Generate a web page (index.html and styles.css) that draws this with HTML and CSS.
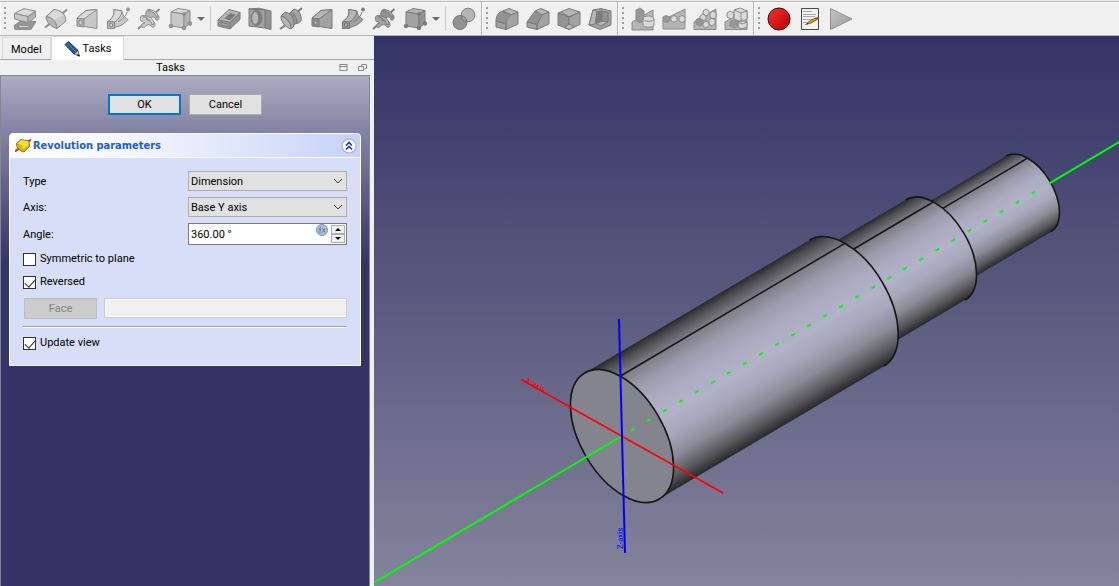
FILE: index.html
```html
<!DOCTYPE html>
<html lang="en">
<head>
<meta charset="utf-8">
<title>Revolution parameters</title>
<link rel="stylesheet" href="styles.css">
</head>
<body>
<svg class="defs" aria-hidden="true">
  <symbol id="pad" viewBox="0 0 24 24"><path class="d" d="M1 18.500l6-4h16l-5 8H2z"/><path class="a" d="M6 18.500h11l-2 2H5z"/><path class="a" d="M1.500 6.500L11 1.500l11.500 2.700L15 9.500z"/><path class="b" d="M1.500 6.500L15 9.500v6.200L1.500 12z"/><path class="c" d="M15 9.500l7.500-5.300v6L15 15.700z"/></symbol>
  <symbol id="revolve" viewBox="0 0 24 24"><path class="l2" d="M1 20.500l5-4M18.500 6.500l4.500-4"/><path class="c" d="M2 9.500C2 15 7 20 13 21.500c0-6-4-11-11-12z"/><path class="b" d="M2 9.500L10 2.500C17 3 21.500 7 22 14l-9 7.500c0-6-4-11-11-12z"/><path class="a flat" d="M4.500 8.800l6-5.300c4 .3 7 2.500 9 5.500-4 0-7 2-9 4.500-1.500-2-3.500-3.700-6-4.700z"/></symbol>
  <symbol id="loft" viewBox="0 0 24 24"><path class="b" d="M2 11L11 3.500l11-1v19L9 19.500z"/><path class="a" d="M2 11l9-7.500 11-1L9 12z"/><path class="c" d="M2 11.500l7 .5v8l-7-1z"/><path class="a" d="M4 13.500l3 .5v4l-3-.5z"/></symbol>
  <symbol id="pipe" viewBox="0 0 24 24"><path class="b" d="M2 14.500C7 11 9 7 7.500 2.500L16 4c0 3 2 6 6 8.500-3 4-8 7-13.500 8z"/><path class="a" d="M2 14.500C7 11 9 7 7.500 2.500L16 4c-.5 4-3 8-7.500 11z"/><path class="c" d="M1.500 14.500l7 .5v6.500h-7z"/><path class="a" d="M3.500 16.500l3 .5v2.500h-3z"/><path class="l" d="M12 15c5-3 8-6 9-10"/><circle class="d" cx="22" cy="2.500" r="1.500"/></symbol>
  <symbol id="helix" viewBox="0 0 24 24"><path class="l2" d="M1 22l8-7M16 8l6.500-6"/><path class="b" d="M4 14c-2-4 1-7 4-5l9 6c2 2 1 6-2 5-1-2-3-3-5-2s-3 4-5 2 1-4 3-4c-2-1-3-2-4-2z"/><path class="c" d="M9 9c-1-5 2-8 5-6l7 5c2 2 1 6-2 5-1-3-3-4-5-2l1 4-5-2z"/><path class="a" d="M6 10c4 0 8 3 9 8l2-1c0-4-4-8-9-8zM11 4c5 0 8 3 9 7l1-2c-1-4-5-6-8-6z"/></symbol>
  <symbol id="box" viewBox="0 0 24 24"><path class="a" d="M3 5l7-3.500 12 2L16 7z"/><path class="b" d="M3 5l13 2v14L3 19z"/><path class="c" d="M16 7l6-3.500v13L16 21z"/><circle class="d" cx="3" cy="19" r="1.800"/><circle class="d" cx="16" cy="21" r="1.800"/><circle class="d" cx="22" cy="16.500" r="1.800"/><circle class="d" cx="16" cy="7" r="1.400"/></symbol>
  <symbol id="pocket" viewBox="0 0 24 24"><path class="a" d="M1 13L12 2.500l11 3L13 15.500z"/><path class="b" d="M1 13l12 2.500V22L1 19z"/><path class="c" d="M13 15.500l10-10v7L13 22z"/><path class="d" d="M8 11.500l5-5 5 1.300-5 5z"/><path class="l" d="M3 15l8 2v3l-8-2z"/></symbol>
  <symbol id="hole" viewBox="0 0 24 24"><path class="c" d="M1 2l10-.8L23 4v18.500L17 21V3z"/><path class="b" d="M1 2l16 1.200V21L1 19z"/><ellipse class="d" cx="8.500" cy="11" rx="5.500" ry="7.500"/><ellipse class="a" cx="7.200" cy="11" rx="3.500" ry="6.500"/></symbol>
  <symbol id="groove" viewBox="0 0 24 24"><path class="l2" d="M1 22l7-5M16 7l7-6"/><path class="b" d="M12 5l3-3c5 1 8 6 7 12l-4 3z"/><path class="c" d="M8 8l4-3c4 2 6 6 6 11l-4 2z"/><path class="b" d="M2 9l4-4c6 1 10 7 9 14l-3 3c-1-7-4-11-10-13z"/><path class="a" d="M2 9c0 6 4 11 10 13 0-6-4-11-10-13z"/></symbol>
  <symbol id="link" viewBox="0 0 24 24"><circle class="a" cx="16" cy="8" r="6.800"/><circle class="c" cx="8" cy="15.500" r="7"/><path class="b" d="M9.300 8.800a6.800 6.800 0 0 1 5.500 6A6.700 6.700 0 0 1 9.300 8.800z"/></symbol>
  <symbol id="fillet" viewBox="0 0 24 24"><path class="a" d="M8 4l6-2.500L23 5l-7 3z"/><path class="c" d="M1 14C1 8 4 5 8 4l8 4c-3 2-5 5-5 9z"/><path class="b" d="M1 14l10 3v5.500L1 20zM11 17c0-5 2-7 5-9l7-3v12l-12 5.500z"/></symbol>
  <symbol id="chamfer" viewBox="0 0 24 24"><path class="a" d="M9 4l6-2.500L23 5l-7 3z"/><path class="c" d="M1 15L9 4l7 4-5 9.500z"/><path class="b" d="M1 15l10 2.500v5L1 20zM11 17.500L16 8l7-3v12l-12 5.500z"/></symbol>
  <symbol id="draft" viewBox="0 0 24 24"><path class="a" d="M1 6l11-4.500L23 5l-11 5z"/><path class="c" d="M1 6l11 4v12.500L1 18z"/><path class="b" d="M12 10l11-5v12.500l-11 5z"/><path class="a" d="M8 20l4-3 5 2.500-5 3z"/><path class="l" d="M4 4.800l8 5.200 7-3.200"/></symbol>
  <symbol id="shell" viewBox="0 0 24 24"><path class="b" d="M5 3l8-1.500L23 4v14l-11 4.500L1 18z"/><path class="d" d="M9 5l5-1v10l-6 3z"/><path class="c" d="M14 4l6 1.500v9.500l-6-1z"/><path class="a" d="M8 17l6-3 6 1-7 4z"/><path class="a" d="M5 3l4 1-2 13-6 1z"/></symbol>
  <symbol id="mirror" viewBox="0 0 24 24"><path class="c" d="M1 15l21-12v20H1z"/><path class="d" d="M5 3l4-2 4 3v9l-4 3-4-3z"/><path class="a" d="M12 12c0-4 11-4 11 0v6c0 3-11 3-11 0z"/><path class="l" d="M12 12c0 3 11 3 11 0"/></symbol>
  <symbol id="linear" viewBox="0 0 24 24"><path class="c" d="M1 13L23 2v20H1z"/><path class="d" d="M1 10l3-1.500L8 10v4l-3 1.500L1 14z"/><path class="a" d="M9 10l3-1.500 3 1.500v4l-3 1.500L9 14zM17 10l3-1.500 3 1.500v4l-3 1.500-3-1.500z"/></symbol>
  <symbol id="polar" viewBox="0 0 24 24"><path class="c" d="M1 15L23 2v20.500H1z"/><path class="a" d="M10 4l3-2 3 2v3l-3 2-3-2zM17 6l3-2 3 2v4l-3 2-3-2zM16 13l3-2 3 2v4l-3 2-3-2zM7 9l3-2 3 2v3l-3 2-3-2zM10 16l3-2 3 2v3l-3 2-3-2z"/><path class="d" d="M3 13l3-2 4 2v4l-3 2-4-2z"/></symbol>
  <symbol id="multi" viewBox="0 0 24 24"><path class="c" d="M1 15L23 3v19.500H1z"/><path class="a" d="M10 3l6-2 7 3v8l-6 3-7-3zM3 6l3-2 4 2v4l-3 2-4-2zM14 15l4-2 5 2v5l-5 2-4-2z"/><path class="d" d="M6 15l4-2 4 2v4l-4 2-4-2z"/><path class="l" d="M10 3l7 3 6-2M17 6v9M14 15l4 2 5-2"/></symbol>
</svg>

<header class="toolbars">
  <div class="bar" role="toolbar" aria-label="Part Design modeling">
    <i class="handle"></i>
    <button class="tool" aria-label="Pad"><svg><use href="#pad"/></svg></button>
    <button class="tool" aria-label="Revolution"><svg><use href="#revolve"/></svg></button>
    <button class="tool" aria-label="Additive loft"><svg><use href="#loft"/></svg></button>
    <button class="tool" aria-label="Additive pipe"><svg><use href="#pipe"/></svg></button>
    <button class="tool" aria-label="Additive helix"><svg><use href="#helix"/></svg></button>
    <button class="tool split" aria-label="Additive box"><svg><use href="#box"/></svg><i class="caret"></i></button>
    <i class="sep"></i>
    <button class="tool dark" aria-label="Pocket"><svg><use href="#pocket"/></svg></button>
    <button class="tool dark" aria-label="Hole"><svg><use href="#hole"/></svg></button>
    <button class="tool dark" aria-label="Groove"><svg><use href="#groove"/></svg></button>
    <button class="tool dark" aria-label="Subtractive loft"><svg><use href="#loft"/></svg></button>
    <button class="tool dark" aria-label="Subtractive pipe"><svg><use href="#pipe"/></svg></button>
    <button class="tool dark" aria-label="Subtractive helix"><svg><use href="#helix"/></svg></button>
    <button class="tool dark split" aria-label="Subtractive box"><svg><use href="#box"/></svg><i class="caret"></i></button>
    <i class="sep"></i>
    <button class="tool dark" aria-label="Boolean"><svg><use href="#link"/></svg></button>
  </div>
  <div class="bar" role="toolbar" aria-label="Dress-up">
    <i class="handle"></i>
    <button class="tool dark" aria-label="Fillet"><svg><use href="#fillet"/></svg></button>
    <button class="tool dark" aria-label="Chamfer"><svg><use href="#chamfer"/></svg></button>
    <button class="tool dark" aria-label="Draft"><svg><use href="#draft"/></svg></button>
    <button class="tool dark" aria-label="Thickness"><svg><use href="#shell"/></svg></button>
  </div>
  <div class="bar" role="toolbar" aria-label="Transform">
    <i class="handle"></i>
    <button class="tool" aria-label="Mirrored"><svg><use href="#mirror"/></svg></button>
    <button class="tool" aria-label="Linear pattern"><svg><use href="#linear"/></svg></button>
    <button class="tool" aria-label="Polar pattern"><svg><use href="#polar"/></svg></button>
    <button class="tool" aria-label="MultiTransform"><svg><use href="#multi"/></svg></button>
  </div>
  <div class="bar last" role="toolbar" aria-label="Macro">
    <i class="handle"></i>
    <button class="tool" aria-label="Record macro"><svg viewBox="0 0 24 24"><defs><linearGradient id="rec" x1="0" y1="0" x2="1" y2="1"><stop offset="0" stop-color="#f33"/><stop offset="1" stop-color="#b00000"/></linearGradient></defs><circle cx="12" cy="12" r="11" fill="url(#rec)" stroke="#3a0a0a"/></svg></button>
    <button class="tool" aria-label="Macros"><svg viewBox="0 0 24 24"><path d="M3.500 1.500h17v21h-17z" fill="#f2f3f0" stroke="#454b48"/><path d="M5 4.500h9M5 7.500h13M5 9.500h12M5 12.500h7M5 15.500h5" stroke="#aaa"/><path d="M9 17l3-3.500 6-2.500 1 1.500-6 3.500z" fill="#d0b000" stroke="#5a4a10" stroke-width=".8"/><path d="M17 11l2.500-1 1 1.800-2.500 1z" fill="#e02020"/><path d="M7.500 17.500l2.500-1" stroke="#222"/></svg></button>
    <button class="tool" aria-label="Execute macro"><svg viewBox="0 0 24 24"><defs><linearGradient id="run" x1="0" y1="0" x2="1" y2="1"><stop offset="0" stop-color="#c4c4c4"/><stop offset="1" stop-color="#9a9a9a"/></linearGradient></defs><path d="M1.500 1.500L23 12 1.500 22.500z" fill="url(#run)" stroke="#909090"/></svg></button>
  </div>
</header>

<main class="work">
  <aside class="dock">
    <nav class="tabs">
      <button class="tab">Model</button>
      <button class="tab active"><svg class="pen" viewBox="0 0 16 16"><path d="M1 3.500L4.500.5 14 9.500l-4 3.500z" fill="#2c5a90" stroke="#16365c"/><path d="M3 2l9 9" stroke="#5484b8"/><path d="M10 13l4-3.500 1.300 5.500z" fill="#c8ccd2" stroke="#333" stroke-width=".7"/><path d="M13.500 13.500l2 1.800" stroke="#111" stroke-width="1.500"/></svg>Tasks</button>
    </nav>
    <div class="dock-title">
      <span>Tasks</span>
      <button class="mini" aria-label="Overlay"><svg viewBox="0 0 9 9"><path d="M1 1.500h7M.5 3.500h8M1 1v7M8 1v7M1 7.500h7"/></svg></button>
      <button class="mini" aria-label="Float"><svg viewBox="0 0 9 9"><path d="M3.500 3V1.500h5v4H6.500M.500 3.500h5v4h-5z"/></svg></button>
    </div>
    <section class="tasks">
      <div class="actions">
        <button class="push primary">OK</button>
        <button class="push">Cancel</button>
      </div>
      <form class="panel">
        <div class="panel-head">
          <svg class="rev" viewBox="0 0 16 16"><path d="M0 13.500l4-3M12 4.500l4-3" stroke="#d22" stroke-width="2"/><path d="M1.500 5.500L6 1.500l8 1.500 .5 5.500L9 14C4.500 13 1.500 10 1.500 5.500z" fill="#d6b800" stroke="#6a5a10" stroke-width=".8"/><path d="M2.500 5.500L6.500 2l7 1.500v3L8.500 11c-1-3-3-5-6-5.500z" fill="#f4df38"/></svg>
          <h2>Revolution parameters</h2>
          <button type="button" class="fold" aria-label="Collapse"><svg viewBox="0 0 16 16"><circle cx="8" cy="8" r="7" fill="#fff" stroke="#b4b8dc" stroke-width="1.500"/><path d="M5 7.500l3-3 3 3M5 11.500l3-3 3 3" fill="none" stroke="#1c3fa8" stroke-width="1.700"/></svg></button>
        </div>
        <div class="panel-body">
          <div class="row">
            <label for="type">Type</label>
            <span class="combo"><select id="type"><option>Dimension</option></select><svg viewBox="0 0 10 6"><path d="M1 1l4 4 4-4"/></svg></span>
          </div>
          <div class="row">
            <label for="axis">Axis:</label>
            <span class="combo"><select id="axis"><option>Base Y axis</option></select><svg viewBox="0 0 10 6"><path d="M1 1l4 4 4-4"/></svg></span>
          </div>
          <div class="row">
            <label for="angle">Angle:</label>
            <span class="spin"><input id="angle" type="text" value="360.00 °">
              <svg class="fx" viewBox="0 0 12 12"><circle cx="6" cy="6" r="5.500" fill="#a9bfd6" stroke="#7f93ab"/><path d="M4 9V4.500Q4 3 5 3M3 5.500h2M6.500 4.500l2.500 4M9 4.500l-2.500 4" fill="none" stroke="#4d6a8c" stroke-width=".8"/></svg>
              <span class="steps"><button type="button" aria-label="Increase"><i class="up"></i></button><button type="button" aria-label="Decrease"><i class="down"></i></button></span>
            </span>
          </div>
          <label class="check first"><input type="checkbox">Symmetric to plane</label>
          <label class="check"><input type="checkbox" checked>Reversed</label>
          <div class="face">
            <button type="button" class="push" disabled>Face</button>
            <input type="text" aria-label="Face" disabled>
          </div>
          <hr>
          <label class="check"><input type="checkbox" checked>Update view</label>
        </div>
      </form>
    </section>
  </aside>

  <section class="view">
    <svg viewBox="374 36 745 550" preserveAspectRatio="xMidYMid slice" role="img" aria-label="Stepped shaft">
      <defs>
        <linearGradient id="metal" x1="0" y1="0" x2="0" y2="1">
          <stop offset="0" stop-color="#2a2a2c"/>
          <stop offset=".04" stop-color="#47474b"/>
          <stop offset=".14" stop-color="#7d7c86"/>
          <stop offset=".26" stop-color="#9c9bab"/>
          <stop offset=".4" stop-color="#adadc2"/>
          <stop offset=".54" stop-color="#b1b1c7"/>
          <stop offset=".66" stop-color="#a8a7ba"/>
          <stop offset=".8" stop-color="#8b8a97"/>
          <stop offset=".91" stop-color="#5b5b61"/>
          <stop offset="1" stop-color="#2a2a2c"/>
        </linearGradient>
      </defs>
      <g transform="translate(622 436) rotate(-30.6)">
        <path d="M363-45.400H473A25 44 0 0 1 473 42.600H363z" fill="url(#metal)"/>
        <path class="edge" d="M473-45.400A25 44 0 0 1 473 42.600M391.400-32.700H489.500"/>
        <path d="M261-58.900H364.500A33 58.300 0 0 1 364.500 57.700H261z" fill="url(#metal)"/>
        <path class="edge" d="M364.500-58.900A33 58.300 0 0 1 364.500 57.700M294.700-43H387"/>
        <path d="M0-73.200H261A41.400 73.200 0 0 1 261 73.200H0z" fill="url(#metal)"/>
        <path class="edge" d="M261-73.200A41.400 73.200 0 0 1 261 73.200M29.200-52.400H290.200"/>
        <ellipse class="edge cap" rx="41.400" ry="73.200"/>
        <path class="axis green dash" d="M10.500 0H482"/>
        <path class="axis green" d="M-320 0H0M496 0H700"/>
      </g>
      <path class="axis red" d="M521 379.500L723 493"/>
      <path class="axis blue" d="M619 319L625 553"/>
      <text class="tag" transform="translate(525 382) rotate(29)" fill="#f00">X-axis</text>
      <text class="tag" transform="translate(623 549) rotate(-91)" fill="#00f">Z-axis</text>
    </svg>
  </section>
</main>
</body>
</html>
```
FILE: styles.css
```css
* { box-sizing: border-box; }
html, body { height: 100%; }
body {
  margin: 0;
  display: flex;
  flex-direction: column;
  background: #f0f0f0;
  color: #000;
  font: 11px/14px Roboto, "Liberation Sans", sans-serif;
  overflow: hidden;
}
button, input, select { font: inherit; color: inherit; margin: 0; padding: 0; border-radius: 0; }
button { border: 0; background: none; }
.defs { position: absolute; width: 0; height: 0; }

/* toolbars */
.toolbars { display: flex; height: 36px; padding-top: 1px; flex: none; }
.bar {
  display: flex;
  align-items: center;
  gap: 7px;
  padding: 1px 5px 0 3px;
  border-top: 1px solid #b4b4b4;
  border-bottom: 1px solid #b4b4b4;
  border-right: 1px solid #b4b4b4;
  box-shadow: inset 1px 1px #fcfcfc;
}
.bar.last { flex: 1; border-right: 0; }
.handle {
  width: 3px;
  height: 26px;
  background: radial-gradient(circle at 2px 2px, #a0a0a0 1px, transparent 1px) 0 0 / 3px 5px;
}
.sep { width: 1px; height: 24px; margin: 0 -1px; background: #cdcdcd; }
.tool {
  --a: #dadada; --b: #c8c8c8; --c: #b4b4b4; --d: #969696; --s: #8c8c8c;
  display: flex;
  align-items: center;
  gap: 5px;
}
.tool.dark { --a: #b6b6b6; --b: #a2a2a2; --c: #929292; --d: #7c7c7c; --s: #7a7a7a; }
.tool svg { width: 24px; height: 24px; flex: none; }
.tool.split { width: 36px; }
.caret { border: 4px solid transparent; border-top-color: #6c6c6c; border-bottom: 0; }
.a, .b, .c, .d { stroke: var(--s); stroke-width: 1; stroke-linejoin: round; }
.a { fill: var(--a); }
.b { fill: var(--b); }
.c { fill: var(--c); }
.d { fill: var(--d); }
.flat { stroke: none; }
.l, .l2 { fill: none; stroke: var(--s); stroke-width: 1; }
.l2 { stroke-width: 2; }

/* dock */
.work { display: flex; flex: 1; min-height: 0; }
.dock { width: 374px; flex: none; display: flex; flex-direction: column; padding-right: 4px; }
.tabs { display: flex; align-items: flex-end; height: 24px; margin-right: -4px; padding-left: 2px; border-bottom: 1px solid #a6a6a6; }
.tab { height: 22px; padding: 2px 8px 0; border: 1px solid #d9d9d9; border-bottom: 0; }
.tab.active {
  display: flex;
  align-items: center;
  gap: 3px;
  height: 24px;
  margin-bottom: -1px;
  padding: 1px 12px 0;
  background: #fff;
}
.pen { width: 16px; height: 16px; }
.dock-title { display: flex; align-items: center; height: 15px; gap: 10px; padding-right: 3px; }
.dock-title span { flex: 1; padding: 1px 0 0 12px; text-align: center; }
.mini { width: 9px; height: 9px; display: flex; }
.mini svg { width: 9px; height: 9px; fill: none; stroke: #8c8c8c; }
.tasks {
  flex: 1;
  padding: 18px 8px;
  border: solid #828790;
  border-width: 1px 1px 0 1px;
  background: #333366 linear-gradient(#acacc2, #8886a6 50px, #333366 190px) no-repeat;
}
.actions { display: flex; justify-content: center; gap: 8px; margin-bottom: 18px; }
.push { width: 73px; height: 21px; padding-top: 1px; border: 1px solid #adadad; background: #e1e1e1; }
.push.primary { border: 2px solid #0078d7; }
.push:disabled { background: #cccccc; border-color: #bfbfbf; color: #838383; }

/* parameter panel */
.panel { border: 1px solid #fff; border-radius: 4px 4px 0 0; background: #d6dff7; }
.panel-head {
  display: flex;
  align-items: center;
  gap: 2px;
  height: 24px;
  padding: 0 3px 0 5px;
  border-bottom: 1px solid #fff;
  border-radius: 4px 4px 0 0;
  background: linear-gradient(90deg, #fff, #f6f8fe 30%, #c6d3f7);
}
.rev { width: 16px; height: 16px; }
.panel-head h2 { flex: 1; margin: 0; font: bold 11px/14px "DejaVu Sans Condensed", "DejaVu Sans", sans-serif; color: #215dc6; }
.fold { width: 16px; height: 16px; display: flex; }
.fold svg { width: 16px; height: 16px; }
.panel-body { display: flex; flex-direction: column; gap: 6px; padding: 13px 13px 12px; }
.row { display: flex; align-items: center; }
.row label { flex: 1; padding-top: 2px; }
.combo, .spin { position: relative; display: flex; width: 159px; height: 20px; }
.combo select { appearance: none; width: 100%; padding: 1px 2px 0; border: 1px solid #adadad; background: #e1e1e1; }
.combo svg { position: absolute; right: 4px; top: 7px; width: 10px; height: 6px; fill: none; stroke: #444; pointer-events: none; }
.spin { height: 22px; border: 1px solid #7a7a7a; background: #fff; }
.spin input { flex: 1; min-width: 0; padding: 2px 2px 0; border: 0; background: none; outline: 0; }
.fx { width: 12px; height: 12px; margin-right: 3px; }
.steps { display: flex; flex-direction: column; width: 15px; padding: 1px 1px 1px 0; }
.steps button { flex: 1; display: flex; align-items: center; justify-content: center; border: 1px solid #adadad; background: #f0f0f0; }
.up, .down { border: 3px solid transparent; }
.up { border-bottom-color: #000; border-top: 0; }
.down { border-top-color: #000; border-bottom: 0; }
.check { display: flex; align-items: center; gap: 4px; height: 14px; margin-bottom: 3px; line-height: 16px; }
.check.first { margin-top: 1px; }
.check input {
  appearance: none;
  display: flex;
  justify-content: center;
  width: 13px;
  height: 13px;
  border: 1px solid #333;
  background: #fff;
}
.check input:checked::after {
  content: "";
  width: 5px;
  height: 9px;
  border: solid #333;
  border-width: 0 1px 1px 0;
  transform: rotate(42deg);
}
.face { display: flex; gap: 7px; padding-left: 1px; }
.face input { flex: 1; min-width: 0; height: 20px; border: 1px solid #ccc; box-shadow: inset 0 0 0 1px #fff; background: #f0f0f0; }
hr { width: 100%; height: 2px; margin: 1px 0 2px; border: 0; border-top: 1px solid #a0a0a0; background: #fff; }

/* 3D view */
.view { flex: 1; min-width: 0; background: linear-gradient(#333366, #84849c); }
.view svg { display: block; width: 100%; height: 100%; }
.edge { fill: none; stroke: #161616; stroke-width: 1.6; }
.cap { fill: #84848f; }
.axis { fill: none; stroke-width: 2; }
.green { stroke: #0f0; }
.dash { stroke-dasharray: 4 14.62; }
.red { stroke: #f00; stroke-width: 1.7; }
.blue { stroke: #00f; }
.tag { font-size: 8px; }
```
